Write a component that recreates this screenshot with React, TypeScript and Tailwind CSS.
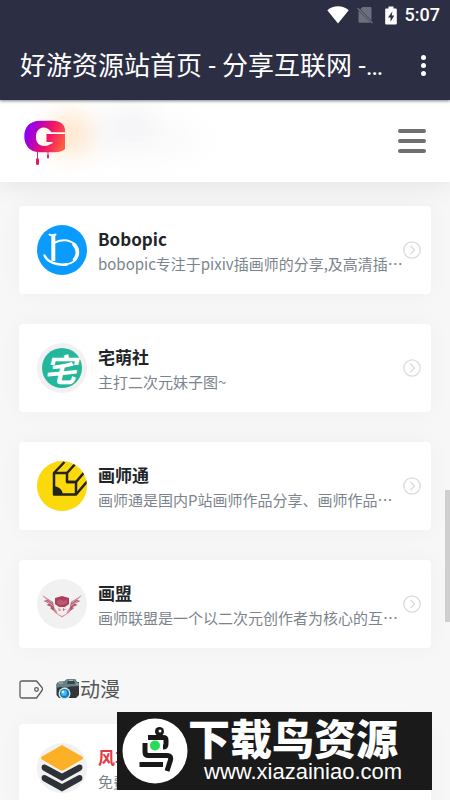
import type { ReactNode } from "react";
import { clsx } from "clsx";

interface Site {
  name: string;
  desc: string;
  icon: ReactNode;
  hot?: boolean;
}

const WifiIcon = () => (
  <svg viewBox="0 0 22 18" className="h-[18px] w-[22px]" fill="#fff">
    <path d="M11 17.5 0.3 4.2C3.3 1.7 7 0.3 11 0.3s7.700 1.400 10.700 3.900z" />
  </svg>
);

const NoSimIcon = () => (
  <svg viewBox="0 0 16 18" className="h-[18px] w-4">
    <path d="M5.500 1H13.500Q14.500 1 14.500 2V14.500L3.200 3.200zM1.500 4.500 13.800 16.800H2.500Q1.500 16.800 1.500 15.800z" fill="#6d6e7e" />
    <path d="M0.500 2.200 15.500 17.200" stroke="#777887" strokeWidth="1.200" />
  </svg>
);

const BatteryIcon = () => (
  <svg viewBox="0 0 12 19" className="h-[19px] w-3">
    <path d="M3.500 0.500h5v2h2.300q1 0 1 1v14q0 1-1 1H1.200q-1 0-1-1v-14q0-1 1-1h2.300z" fill="#fff" />
    <path d="M7.500 5.200 3 11.500h2.500v4.300L9.300 9.500H6.700z" fill="#2c2e43" />
  </svg>
);

const DripLogo = () => (
  <svg viewBox="0 0 42 46" className="h-[46px] w-[42px]">
    <defs>
      <linearGradient id="drip" x1="0" y1="0.300" x2="1" y2="0.600">
        <stop offset="0" stopColor="#8500ff" />
        <stop offset="0.250" stopColor="#b000c8" />
        <stop offset="0.600" stopColor="#ef1466" />
        <stop offset="1" stopColor="#ff5b42" />
      </linearGradient>
    </defs>
    <path
      fill="url(#drip)"
      d="M41 12.500H27.500Q24.500 7.500 19 7.500C14 8.500 12 12 12 17c0 5.500 3 9 8 9 4 0 7-1.500 8-4h-5.500v-8H41V29Q37 32.200 31 32.200H15C6 32 .3 25.500.3 16.500.3 7 6 1 16 .8h13C36 1 41 4.500 41 10z"
    />
    <path d="M24 13.200H41M22.500 22.800h6" stroke="#fff" strokeWidth="1.500" />
    <path d="M13.500 31v9M24 31v5" stroke="#e0207a" strokeWidth="1" />
    <rect x="12" y="38" width="3" height="7" rx="1.500" fill="#d51e65" />
    <rect x="23" y="34.500" width="2" height="4" rx="1" fill="#e0207a" />
  </svg>
);

const BobopicIcon = () => (
  <svg viewBox="0 0 50 50" className="size-full" fill="none" stroke="#fff" strokeLinecap="round">
    <rect width="50" height="50" fill="#0a9bff" stroke="none" />
    <path d="M12.500 9.500Q15 11 18.500 9.500" strokeWidth="2" />
    <path d="M16.300 10V36" strokeWidth="4" strokeLinecap="butt" />
    <path d="M7.500 30.500C11 38 21 40.500 30 39.500" strokeWidth="2.500" />
    <path d="M18 17.500C29 12.500 41 17 41 27 41 35 35 39 27 39.500" strokeWidth="2" />
    <path d="M37 19.500C41 24 41.500 29.500 37.500 34.500" strokeWidth="3.500" />
  </svg>
);

const ZhaiIcon = () => (
  <span className="flex size-10 items-center justify-center rounded-full bg-[#25b79b] pr-1 text-[32px] leading-10 font-bold text-white italic">
    宅
  </span>
);

const PencilIcon = () => (
  <svg viewBox="0 0 50 50" className="size-full" fill="none" stroke="#25231d" strokeWidth="2.500" strokeLinejoin="round">
    <rect width="50" height="50" fill="#fbd90a" stroke="none" />
    <path d="M17 12H30V21H39V33.500H17z" />
    <path d="M17 12 27.500 1M30 12 40 1M30 21H39L50 8M39 33.500 51 19.500" />
    <path d="M17 25Q25 26 26 33.500H17z" fill="#25231d" stroke="none" />
  </svg>
);

const WingsIcon = () => (
  <svg viewBox="0 0 50 50" className="size-full">
    <path d="M18 19 25 17 32 19V25Q28 28.500 25 28.500T18 25z" fill="#a93f5c" />
    <path d="M20 22 23 20.500 27 22 30 20.500V24Q28 26 25 26 21 26 20 24z" fill="#bd5870" />
    <path d="M5 16 16 23 18 33 13 29 14.500 28 9.500 26 12 24.500 6.500 22 10 21zM45 16 34 23 32 33 37 29 35.500 28 40.500 26 38 24.500 43.500 22 40 21z" fill="#b35a72" />
    <path d="M8 18.500 15.500 24M9.500 22 16 26.500M42 18.500 34.500 24M40.500 22 34 26.500" stroke="#e4c0c8" strokeWidth="0.800" />
    <path d="M17 28V33L25 38.500 33 33V28L31 31 29 35 25 37 21 35 19 31z" fill="#d48b9b" />
    <path d="M20 28H30V33L25 36 20 33z" fill="#f6e9eb" />
    <path d="M22 29v3M24 31h-2M26.500 29v3M25.500 30.500h3" stroke="#b37786" strokeWidth="0.800" />
  </svg>
);

const LayersIcon = () => (
  <svg viewBox="0 0 50 50" className="size-full">
    <path d="M25 2 45 13.500Q47 15 45 16.500L27 27Q25 28 23 27L5 16.500Q3 15 5 13.500z" fill="#fcb025" />
    <path d="M5 22.500Q7 20.500 10 22.500L25 30.500 40 22.500Q43 20.500 45 22.500 46.500 26 43 28L25 38 7 28Q3.500 26 5 22.500zM5 33Q7 31 10 33L25 41 40 33Q43 31 45 33 46.500 36.500 43 38.500L25 48.500 7 38.500Q3.500 36.500 5 33z" fill="#2e3135" />
  </svg>
);

const TagIcon = () => (
  <svg viewBox="0 0 24 19" className="h-[19px] w-6" fill="none" stroke="#5c5c5c" strokeWidth="1.300" strokeLinejoin="round">
    <path d="M3 1H17.500L23 7.500Q24 9 23 10.500L17.500 18H3Q1 18 1 16V3Q1 1 3 1z" />
    <circle cx="17.500" cy="9.500" r="1.800" />
  </svg>
);

const CameraIcon = () => (
  <svg viewBox="0 0 25 22" className="h-[22px] w-[25px]">
    <path d="M3 4 9 3.500 13 1H20L22 4H24V17L21 20H4L1.500 17V6z" fill="#30363a" />
    <path d="M1.500 7 4 3.500H9L12 1H20L22 4 24 5V8L15 8.500 11 10 5 9 1.500 10z" fill="#678287" />
    <path d="M13 3H19L20 6H12z" fill="#354449" />
    <path d="M3 5H8M21 6H23M14 2.500H18" stroke="#a5babb" strokeWidth="1" />
    <circle cx="9.500" cy="15.500" r="6" fill="#d2e5e9" />
    <circle cx="9.500" cy="15.500" r="4.600" fill="#1678ae" />
    <circle cx="9" cy="15" r="3" fill="#43b9ee" />
    <circle cx="8" cy="14" r="1.300" fill="#d2f4ff" />
  </svg>
);

const ArrowIcon = () => (
  <svg viewBox="0 0 18 18" className="size-[18px] shrink-0" fill="none" stroke="#d9dcdc" strokeWidth="1.300">
    <circle cx="9" cy="9" r="8.200" />
    <path d="M7.300 4.800 11.500 9 7.300 13.200" />
  </svg>
);

const BirdIcon = () => (
  <svg viewBox="0 0 66 66" className="size-[66px] shrink-0">
    <circle cx="33" cy="33" r="32.500" fill="#fff" />
    <g fill="none" stroke="#181818" strokeWidth="5">
      <path d="M37 16V19M41 29Q44 29 44 26V22Q44 19.500 41 19.500H26M23 25V34Q23 37.500 26.500 37.500H45Q49.500 37.500 48.500 42L45 53" />
      <path d="M17.500 46.500H41" />
    </g>
    <circle cx="37.500" cy="13.500" r="4.500" fill="#181818" />
    <circle cx="38" cy="13" r="1.500" fill="#fff" />
    <circle cx="33" cy="27.500" r="5" fill="#24dc55" />
  </svg>
);

const illustrationSites: Site[] = [
  { name: "Bobopic", desc: "bobopic专注于pixiv插画师的分享,及高清插⋯", icon: <BobopicIcon /> },
  { name: "宅萌社", desc: "主打二次元妹子图~", icon: <ZhaiIcon /> },
  { name: "画师通", desc: "画师通是国内P站画师作品分享、画师作品⋯", icon: <PencilIcon /> },
  { name: "画盟", desc: "画师联盟是一个以二次元创作者为核心的互⋯", icon: <WingsIcon /> },
];

const animeSites: Site[] = [{ name: "风车动漫", desc: "免费在线动漫", icon: <LayersIcon />, hot: true }];

const SiteCard = ({ site }: { site: Site }) => (
  <a href="#" className="flex h-[88px] items-center rounded bg-white pr-2.5 pl-[18px] shadow-[0_0_24px_rgba(0,0,0,0.035)]">
    <span className="flex size-[50px] shrink-0 items-center justify-center overflow-hidden rounded-full bg-[#f1f1f1]">
      {site.icon}
    </span>
    <span className="ml-[11px] flex min-w-0 flex-1 flex-col pt-px">
      <span className={clsx("text-[17px] leading-[25px] font-bold", site.hot ? "text-[#e63946]" : "text-[#212529]")}>
        {site.name}
      </span>
      <span className="overflow-hidden text-[15px] leading-[25px] whitespace-nowrap text-[#7b848c]">{site.desc}</span>
    </span>
    <ArrowIcon />
  </a>
);

const App = () => {
  return (
    <div className="relative flex h-screen flex-col overflow-hidden bg-[#f7f7f7] font-['Noto_Sans_CJK_SC',sans-serif]">
      {/* Status bar and title */}
      <header className="relative z-10 h-[100px] shrink-0 bg-[#2c2e43] text-white shadow-[0_1px_3px_rgba(44,46,67,0.6)]">
        <div className="flex h-[30px] items-center justify-end pr-2.5">
          <WifiIcon />
          <span className="ml-2 flex"><NoSimIcon /></span>
          <span className="ml-3 flex"><BatteryIcon /></span>
          <span className="ml-2 font-['Roboto',sans-serif] text-lg font-medium">5:07</span>
        </div>
        <div className="flex h-[70px] items-center justify-between pr-6 pl-5">
          <h1 className="pt-0.5 font-['Roboto','Noto_Sans_CJK_SC',sans-serif] text-[26px] whitespace-nowrap">
            好游资源站首页 - 分享互联网 -…
          </h1>
          <button aria-label="更多" className="flex flex-col gap-[3px]">
            <span className="size-[5px] rounded-full bg-white" />
            <span className="size-[5px] rounded-full bg-white" />
            <span className="size-[5px] rounded-full bg-white" />
          </button>
        </div>
      </header>

      {/* Site navigation */}
      <nav className="relative flex h-[82px] shrink-0 items-center justify-between bg-white px-6 shadow-[0_0_28px_rgba(0,0,0,0.1)]">
        <div className="absolute top-3 left-12 size-11 rounded-full bg-orange-200/60 blur-md" />
        <div className="absolute top-3 left-[106px] h-5 w-12 rounded-full bg-gray-300/40 blur-lg" />
        <div className="absolute top-8 left-[88px] h-4 w-28 rounded-full bg-gray-200/40 blur-lg" />
        <a href="#" aria-label="首页" className="relative pt-1">
          <DripLogo />
        </a>
        <button aria-label="菜单" className="flex flex-col gap-1.5 py-px">
          <span className="h-1 w-7 rounded-full bg-[#6f6f6f]" />
          <span className="h-1 w-7 rounded-full bg-[#6f6f6f]" />
          <span className="h-1 w-7 rounded-full bg-[#6f6f6f]" />
        </button>
      </nav>

      <main className="flex shrink-0 flex-col px-[19px] pt-6">
        <section className="flex flex-col gap-[30px]">
          {illustrationSites.map((site) => (
            <SiteCard key={site.name} site={site} />
          ))}
        </section>
        <h2 className="flex h-[76px] items-center pt-1.5 text-xl text-[#555]">
          <TagIcon />
          <span className="ml-3 flex"><CameraIcon /></span>
          动漫
        </h2>
        <section className="flex flex-col gap-[30px]">
          {animeSites.map((site) => (
            <SiteCard key={site.name} site={site} />
          ))}
        </section>
      </main>

      {/* Scroll position */}
      <div className="absolute top-[490px] right-0 h-[132px] w-[5px] bg-[#cfcfcf]" />

      {/* Watermark banner */}
      <div className="absolute right-[18px] bottom-2.5 flex h-[78px] w-[315px] items-center bg-[#1a1a1a] pl-[5px] text-white">
        <BirdIcon />
        <div className="flex flex-col items-start">
          <span className="text-[42px] leading-[42px] font-black whitespace-nowrap">下载鸟资源</span>
          <span className="ml-4 font-['Liberation_Sans',sans-serif] text-[22px] leading-7">www.xiazainiao.com</span>
        </div>
      </div>
    </div>
  );
};

export default App;
